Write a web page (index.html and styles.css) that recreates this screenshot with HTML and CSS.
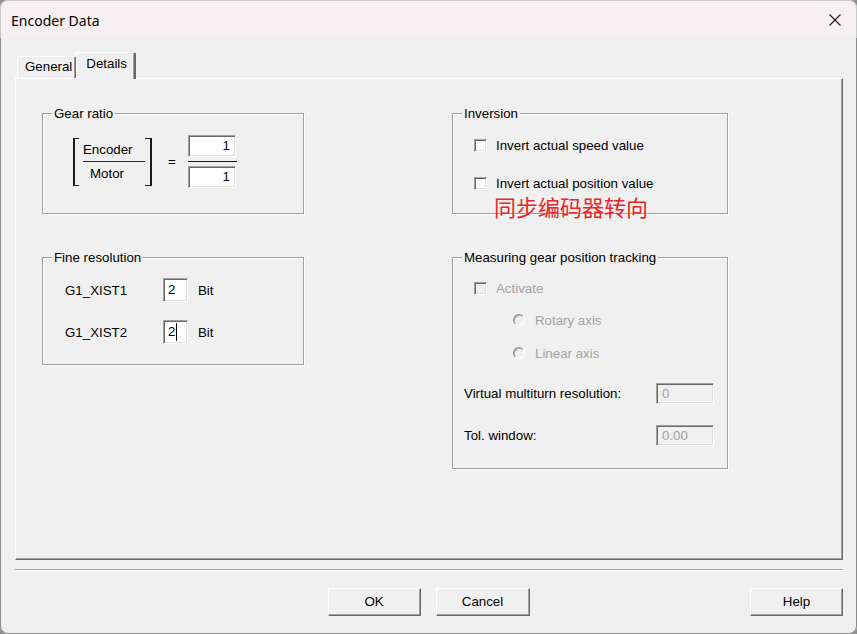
FILE: index.html
```html
<!DOCTYPE html>
<html lang="en">
<head>
<meta charset="utf-8">
<title>Encoder Data</title>
<link rel="stylesheet" href="styles.css">
</head>
<body>
<div class="window">
  <div class="titlebar">
    <span class="title">Encoder Data</span>
    <svg class="close" width="12" height="12" viewBox="0 0 12 12"><path d="M0.5 0.5 L11.5 11.5 M11.5 0.5 L0.5 11.5" stroke="#1b1b1b" stroke-width="1.1" fill="none"/></svg>
  </div>

  <div class="tabs">
    <div class="tab">General</div>
    <div class="tab tab-active">Details</div>
  </div>

  <div class="panel">
    <div class="grid">
      <div class="group group-gear">
        <span class="legend">Gear ratio</span>
        <div class="gear-row">
          <div class="bracket bracket-l"></div>
          <div class="fraction">
            <div class="frac-cell">Encoder</div>
            <div class="frac-line"></div>
            <div class="frac-cell">Motor</div>
          </div>
          <div class="bracket bracket-r"></div>
          <div class="equals">=</div>
          <div class="ratio-col">
            <div class="field field-ratio">1</div>
            <div class="ratio-line"></div>
            <div class="field field-ratio">1</div>
          </div>
        </div>
      </div>

      <div class="group group-inv">
        <span class="legend">Inversion</span>
        <div class="check-row"><span class="checkbox"></span><span>Invert actual speed value</span></div>
        <div class="check-row check-row-2"><span class="checkbox"></span><span>Invert actual position value</span></div>
        <span class="note">同步编码器转向</span>
      </div>

      <div class="group group-fine">
        <span class="legend">Fine resolution</span>
        <div class="fine-row">
          <span class="fine-label">G1_XIST1</span>
          <div class="field field-bit">2</div>
          <span class="unit">Bit</span>
        </div>
        <div class="fine-row fine-row-2">
          <span class="fine-label">G1_XIST2</span>
          <div class="field field-bit">2<span class="caret"></span></div>
          <span class="unit">Bit</span>
        </div>
      </div>

      <div class="group group-meas">
        <span class="legend">Measuring gear position tracking</span>
        <div class="check-row check-act disabled"><span class="checkbox checkbox-dis"></span><span>Activate</span></div>
        <div class="radio-row disabled"><span class="radio"></span><span>Rotary axis</span></div>
        <div class="radio-row radio-row-2 disabled"><span class="radio"></span><span>Linear axis</span></div>
        <div class="value-row">
          <span class="value-label">Virtual multiturn resolution:</span>
          <div class="field field-dis">0</div>
        </div>
        <div class="value-row value-row-2">
          <span class="value-label">Tol. window:</span>
          <div class="field field-dis">0.00</div>
        </div>
      </div>
    </div>
  </div>

  <div class="separator"></div>

  <div class="buttons">
    <div class="btn-center">
      <div class="btn">OK</div>
      <div class="btn">Cancel</div>
    </div>
    <div class="btn btn-help">Help</div>
  </div>
</div>
</body>
</html>
```

FILE: styles.css
```css
* { box-sizing: border-box; }

html, body {
  margin: 0;
  padding: 0;
  width: 857px;
  height: 634px;
  overflow: hidden;
  background: #8d8d8d;
}

.window {
  width: 857px;
  height: 634px;
  background: #f0f0f0;
  border-radius: 8px;
  box-shadow: inset 0 0 0 1px #8a8a8a;
  overflow: hidden;
  font-family: "Liberation Sans", Arial, sans-serif;
  font-size: 13.3px;
  color: #000;
}

.titlebar {
  height: 38px;
  background: #f7f0f3;
  display: flex;
  align-items: center;
  padding: 2px 16px 0 11px;
  border-radius: 8px 8px 0 0;
  box-shadow: inset 0 1px 0 #c8c8c8, inset 1px 0 0 #c8c8c8, inset -1px 0 0 #c8c8c8;
}

.title {
  font-family: "Noto Sans", "Segoe UI", sans-serif;
  font-size: 14px;
  color: #000;
}

.close {
  margin-left: auto;
  display: block;
}

/* tabs */
.tabs {
  margin-top: 14px;
  height: 26px;
  padding-left: 17px;
  display: flex;
  align-items: flex-end;
  position: relative;
  z-index: 1;
}

.tab {
  height: 22px;
  line-height: 20px;
  padding: 0 3px 0 7px;
  border-top: 1px solid #fff;
  border-left: 1px solid #fff;
  border-right: 1px solid #696969;
  box-shadow: inset -1px 0 0 #a0a0a0;
  border-radius: 2px 2px 0 0;
  background: #f0f0f0;
}

.tab-active {
  height: 27px;
  margin-bottom: -1px;
  padding: 0 7px 0 9px;
  line-height: 22px;
  border-right-width: 2px;
}

/* panel */
.panel {
  margin: 0 14px 0 15px;
  height: 482px;
  border-top: 1px solid #fff;
  border-left: 1px solid #fff;
  border-right: 1px solid #696969;
  border-bottom: 1px solid #696969;
  box-shadow: inset -1px -1px 0 #a0a0a0;
  padding: 34px 0 0 26px;
}

.grid {
  display: grid;
  grid-template-columns: 262px 276px;
  column-gap: 148px;
  row-gap: 43px;
  align-items: start;
}

.group {
  position: relative;
  border: 1px solid #a0a0a0;
  box-shadow: 1px 1px 0 #fff, inset 1px 1px 0 #fff;
}

.legend {
  position: absolute;
  top: -8px;
  left: 9px;
  padding: 0 2px;
  line-height: 15px;
  background: #f0f0f0;
  white-space: nowrap;
}

/* gear ratio */
.group-gear {
  height: 101px;
  padding: 21px 0 0 30px;
}

.gear-row {
  display: flex;
  align-items: center;
}

.bracket {
  width: 6px;
  height: 48px;
  border-top: 1px solid #1a1a1a;
  border-bottom: 1px solid #1a1a1a;
}

.bracket-l { border-left: 2px solid #1a1a1a; }
.bracket-r { width: 7px; border-right: 2px solid #1a1a1a; }

.fraction {
  width: 62px;
  margin-left: 4px;
  display: flex;
  flex-direction: column;
  height: 48px;
}

.frac-cell {
  width: 48px;
  height: 23px;
  line-height: 23px;
  text-align: center;
  white-space: nowrap;
}

.frac-line {
  height: 1px;
  background: #2a2a2a;
}

.equals {
  margin-left: 16px;
  width: 8px;
}

.ratio-col {
  margin-left: 12px;
  width: 49px;
  display: flex;
  flex-direction: column;
}

.ratio-line {
  height: 1px;
  background: #1a1a1a;
  margin: 4px 0;
}

.field {
  border: 1px solid;
  border-color: #a0a0a0 #fff #fff #a0a0a0;
  box-shadow: inset 1px 1px 0 #696969, inset -1px -1px 0 #e3e3e3;
  background: #fff;
  line-height: 20px;
}

.field-ratio {
  width: 48px;
  height: 22px;
  text-align: right;
  padding-right: 5px;
}

/* fine resolution */
.group-fine {
  height: 108px;
  padding: 20px 0 0 22px;
}

.fine-row {
  display: flex;
  align-items: center;
  height: 24px;
}

.fine-row-2 { margin-top: 18px; }

.fine-label { width: 98px; }

.field-bit {
  width: 25px;
  height: 24px;
  line-height: 22px;
  padding-left: 4px;
  display: flex;
  align-items: center;
}

.caret {
  display: inline-block;
  width: 1px;
  height: 18px;
  background: #000;
  margin-left: 1px;
}

.unit { margin-left: 10px; }

/* inversion */
.group-inv {
  height: 101px;
  padding: 23px 0 0 21px;
}

.check-row {
  display: flex;
  align-items: center;
  height: 16px;
  white-space: nowrap;
}

.check-row-2 { margin-top: 22px; }

.checkbox {
  width: 13px;
  height: 13px;
  margin-right: 9px;
  border: 1px solid;
  border-color: #a0a0a0 #fff #fff #a0a0a0;
  box-shadow: inset 1px 1px 0 #696969, inset -1px -1px 0 #e3e3e3;
  background: #fff;
  flex: none;
}

.checkbox-dis { background: #f0f0f0; }

.note {
  position: absolute;
  left: 41px;
  top: 81px;
  font-family: "Noto Sans CJK SC", sans-serif;
  font-size: 22px;
  line-height: 22px;
  color: #e8262b;
  white-space: nowrap;
}

/* measuring */
.group-meas {
  height: 212px;
  padding: 22px 0 0 11px;
}

.disabled { color: #a3a3a3; }

.check-act { margin-left: 10px; }

.radio-row {
  display: flex;
  align-items: center;
  height: 16px;
  margin-top: 16px;
  margin-left: 49px;
}

.radio-row-2 { margin-top: 17px; }

.radio {
  width: 12px;
  height: 12px;
  border-radius: 50%;
  border: 1px solid;
  border-color: #8a8a8a #fff #fff #8a8a8a;
  box-shadow: inset 1px 1px 0 #b4b4b4;
  background: #f0f0f0;
  margin-right: 10px;
  flex: none;
}

.value-row {
  display: flex;
  align-items: center;
  margin-top: 22px;
  height: 21px;
}

.value-row-2 { margin-top: 21px; }

.value-label { width: 192px; white-space: nowrap; }

.field-dis {
  width: 58px;
  height: 21px;
  line-height: 19px;
  padding-left: 5px;
  background: #f0f0f0;
  color: #a3a3a3;
}

/* bottom */
.separator {
  margin: 9px 14px 0 15px;
  height: 2px;
  border-top: 1px solid #a0a0a0;
  border-bottom: 1px solid #fff;
}

.buttons {
  margin-top: 17px;
  padding: 0 14px;
  display: grid;
  grid-template-columns: 1fr auto 1fr;
}

.btn-center {
  grid-column: 2;
  display: flex;
  gap: 15px;
}

.btn {
  width: 93px;
  height: 28px;
  line-height: 26px;
  text-align: center;
  border: 1px solid;
  border-color: #fff #696969 #696969 #fff;
  box-shadow: inset -1px -1px 0 #a0a0a0;
  background: #f0f0f0;
}

.btn-center .btn + .btn { width: 94px; }

.btn-help {
  grid-column: 3;
  justify-self: end;
}
```
